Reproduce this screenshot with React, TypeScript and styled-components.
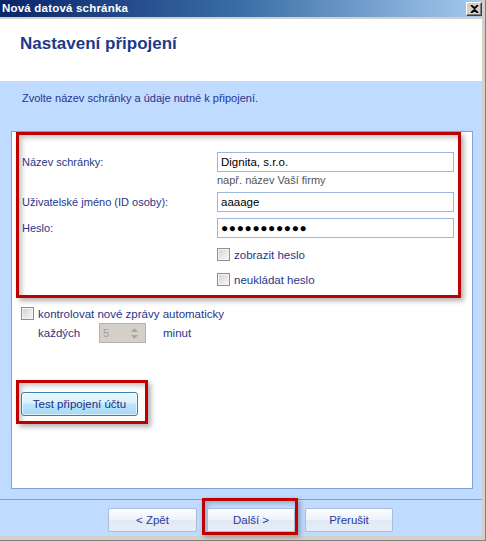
import React from "react";
import styled, { createGlobalStyle } from "styled-components";

const Global = createGlobalStyle`
  html, body { margin: 0; padding: 0; background: #d4d0c8; }
  * { box-sizing: border-box; }
`;

const UI = `"Liberation Sans", Arial, sans-serif`;

const Frame = styled.div`
  width: 486px;
  height: 541px;
  background: #d4d0c8;
  padding: 0 4px 4px 0;
  border-right: 1px solid #808080;
  border-bottom: 1px solid #808080;
`;

const Inner = styled.div`
  width: 482px;
  height: 536px;
  display: flex;
  flex-direction: column;
  background: #bfdbff;
  font-family: ${UI};
`;

const TitleBar = styled.div`
  height: 19px;
  display: flex;
  align-items: center;
  justify-content: space-between;
  padding: 0 0 1px 2px;
  background: linear-gradient(to right, #0a246a 0%, #3a6ea5 50%, #a6caf0 100%);
  border-bottom: 2px solid #d4d0c8;
`;

const TitleText = styled.span`
  color: #fff;
  font: bold 11.5px ${UI};
  letter-spacing: 0.2px;
`;

const CloseButton = styled.div`
  width: 16px;
  height: 14px;
  background: #d4d0c8;
  border: 1px solid;
  border-color: #fff #404040 #404040 #fff;
  box-shadow: inset -1px -1px 0 #808080;
  display: flex;
  align-items: center;
  justify-content: center;
  margin-top: 2px;
`;

const Header = styled.div`
  height: 62px;
  background: #fff;
  padding: 15px 0 0 20px;
`;

const Heading = styled.h1`
  margin: 0;
  font: bold 17px ${UI};
  color: #1d3a87;
`;

const Intro = styled.div`
  padding: 10px 0 0 22px;
  height: 50px;
  font-size: 11px;
  line-height: 14px;
  color: #28368a;
`;

const Panel = styled.div`
  margin-left: 11px;
  width: 462px;
  height: 358px;
  background: #fff;
  border: 1px solid #7ea3d8;
  padding: 0 0 0 4px;
`;

const Highlight = styled.div<{ $pad: string }>`
  border: 3px solid #c00000;
  padding: ${(p) => p.$pad};
  box-shadow: 3px 3px 5px rgba(0, 0, 0, 0.3), inset 3px 3px 5px rgba(0, 0, 0, 0.22);
`;

const FormBox = styled(Highlight)`
  width: 445px;
  height: 166px;
`;

const Row = styled.div<{ $mt?: number }>`
  display: flex;
  align-items: center;
  margin-top: ${(p) => p.$mt ?? 0}px;
`;

const Label = styled.label`
  width: 195px;
  font-size: 11px;
  color: #27358a;
`;

const Input = styled.div<{ $dots?: boolean }>`
  width: 237px;
  height: 20px;
  border: 1px solid #9fb7dc;
  display: flex;
  align-items: center;
  padding-left: 3px;
  font-size: ${(p) => (p.$dots ? "12px" : "11.5px")};
  letter-spacing: ${(p) => (p.$dots ? "0.6px" : "0")};
  color: #000;
`;

const Hint = styled.div`
  margin: 1px 0 0 195px;
  font-size: 11px;
  line-height: 14px;
  color: #555;
`;

const Check = styled.span`
  width: 13px;
  height: 13px;
  flex: none;
  border: 1px solid #8e8f8f;
  background: linear-gradient(135deg, #d0d0d0 0%, #eaeaea 60%, #f6f6f6 100%);
  box-shadow: inset 0 0 0 1px #f4f4f4;
  margin-right: 4px;
`;

const CheckText = styled.span`
  font-size: 11.5px;
  color: #27358a;
`;

const CheckRow = styled.div<{ $indent: number; $mt: number }>`
  display: flex;
  align-items: center;
  height: 17px;
  margin: ${(p) => p.$mt}px 0 0 ${(p) => p.$indent}px;
`;

const IntervalRow = styled.div`
  display: flex;
  align-items: center;
  margin: 1px 0 0 22px;
  font-size: 11.5px;
  color: #27358a;
`;

const IntervalLabel = styled.span`
  width: 61px;
`;

const Spinner = styled.div`
  width: 47px;
  height: 20px;
  background: #d4d0c8;
  border: 1px solid #b5b2aa;
  display: flex;
  align-items: center;
  justify-content: space-between;
  padding: 0 3px 0 3px;
  color: #a09d97;
  font-size: 11px;
  margin-right: 17px;
`;

const Arrows = styled.div`
  display: flex;
  flex-direction: column;
  gap: 3px;
  align-items: center;
  padding-right: 4px;
`;

const TestBox = styled(Highlight)`
  margin-top: 37px;
  width: 132px;
  height: 44px;
`;

const AeroButton = styled.button`
  width: 117px;
  height: 24px;
  border: 1px solid #3c7fb1;
  border-radius: 3px;
  background: linear-gradient(to bottom, #eaf6fd 0%, #d9f0fc 45%, #bee6fd 50%, #a7d9f5 100%);
  box-shadow: inset 0 0 0 1px rgba(255, 255, 255, 0.6);
  font: 11.5px ${UI};
  color: #1c2f7e;
  padding: 0;
`;

const Footer = styled.div`
  margin-top: 10px;
  border-top: 1px solid #9a9a9a;
  padding: 8px 0 0 108px;
  display: flex;
  gap: 10px;
`;

const FooterButton = styled.button<{ $w: number }>`
  position: relative;
  width: ${(p) => p.$w}px;
  height: 24px;
  border: 1px solid #a9bcd8;
  border-radius: 2px;
  background: linear-gradient(to bottom, #fbfcfe 0%, #eef3fa 48%, #dfe8f4 52%, #e8eef7 100%);
  font: 11.5px ${UI};
  color: #2a3a9a;
  padding: 0;
`;

const Marked = styled.span`
  position: relative;
  display: flex;
  &::before {
    content: "";
    position: absolute;
    left: -5px;
    top: -10px;
    right: -3px;
    bottom: -3px;
    border: 3px solid #c00000;
    box-shadow: 2px 2px 5px rgba(0, 0, 0, 0.3), inset 2px 2px 5px rgba(0, 0, 0, 0.22);
    pointer-events: none;
  }
`;

const Arrow = ({ up }: { up?: boolean }) => (
  <svg width="7" height="4" viewBox="0 0 7 4">
    <path d={up ? "M0 4 L3.5 0 L7 4 Z" : "M0 0 L3.5 4 L7 0 Z"} fill="#a8a6a0" />
  </svg>
);

export default function App() {
  return (
    <>
      <Global />
      <Frame>
        <Inner>
          <TitleBar>
            <TitleText>Nová datová schránka</TitleText>
            <CloseButton>
              <svg width="9" height="8" viewBox="0 0 9 8">
                <path d="M1 0 L4.5 3.2 L8 0 M1 8 L4.5 4.8 L8 8" stroke="#000" strokeWidth="1.8" fill="none" />
              </svg>
            </CloseButton>
          </TitleBar>
          <Header>
            <Heading>Nastavení připojení</Heading>
          </Header>
          <Intro>Zvolte název schránky a údaje nutné k připojení.</Intro>
          <Panel>
            <FormBox $pad="17px 4px 0 3px">
              <Row>
                <Label>Název schránky:</Label>
                <Input>Dignita, s.r.o.</Input>
              </Row>
              <Hint>např. název Vaší firmy</Hint>
              <Row $mt={5}>
                <Label>Uživatelské jméno (ID osoby):</Label>
                <Input>aaaage</Input>
              </Row>
              <Row $mt={6}>
                <Label>Heslo:</Label>
                <Input $dots>●●●●●●●●●●●</Input>
              </Row>
              <CheckRow $indent={195} $mt={8}>
                <Check />
                <CheckText>zobrazit heslo</CheckText>
              </CheckRow>
              <CheckRow $indent={195} $mt={8}>
                <Check />
                <CheckText>neukládat heslo</CheckText>
              </CheckRow>
            </FormBox>
            <CheckRow $indent={5} $mt={7}>
              <Check />
              <CheckText>kontrolovat nové zprávy automaticky</CheckText>
            </CheckRow>
            <IntervalRow>
              <IntervalLabel>každých</IntervalLabel>
              <Spinner>
                <span>5</span>
                <Arrows>
                  <Arrow up />
                  <Arrow />
                </Arrows>
              </Spinner>
              <span>minut</span>
            </IntervalRow>
            <TestBox $pad="9px 7px 5px 2px">
              <AeroButton>Test připojení účtu</AeroButton>
            </TestBox>
          </Panel>
          <Footer>
            <FooterButton $w={89}>&lt; Zpět</FooterButton>
            <Marked>
              <FooterButton $w={88}>Další &gt;</FooterButton>
            </Marked>
            <FooterButton $w={88}>Přerušit</FooterButton>
          </Footer>
        </Inner>
      </Frame>
    </>
  );
}
